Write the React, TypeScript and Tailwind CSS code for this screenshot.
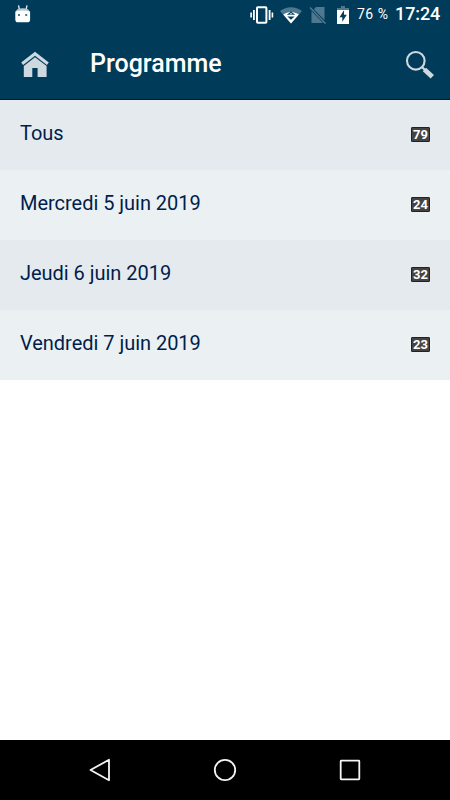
import type { ReactNode } from 'react';

interface Day {
  label: string;
  count: number;
}

const days: Day[] = [
  { label: 'Tous', count: 79 },
  { label: 'Mercredi 5 juin 2019', count: 24 },
  { label: 'Jeudi 6 juin 2019', count: 32 },
  { label: 'Vendredi 7 juin 2019', count: 23 },
];

function DroidIcon() {
  return (
    <svg width="16" height="20" viewBox="0 0 16 20">
      <path d="M3.5 .3 4.4 4.5M12 .3 11.1 4.5" stroke="#e6edf0" strokeWidth="1.3" />
      <path d="M.8 7C1 4 4 3.2 7.7 3.2s6.7.8 6.9 3.8z" fill="#b3c4cd" />
      <path d="M.3 6.4q7.4-1.6 14.8 0v8q0 2.9-2.9 2.9h-9q-2.9 0-2.9-2.9z" fill="#fff" />
      <path d="M3 9h2v2H3zM10.2 9h2v2h-2z" fill="#54788c" />
    </svg>
  );
}

function VibrateIcon() {
  return (
    <svg width="24" height="20" viewBox="0 0 24 20" fill="none" stroke="#fff">
      <rect x="7" y="2.3" width="9.4" height="15.4" rx="0.8" strokeWidth="2" />
      <path d="M3.9 5v10M19.6 5v10" strokeWidth="1.8" />
      <path d="M1.1 7.5v5M22.4 7.5v5" strokeWidth="1.6" />
    </svg>
  );
}

function WifiIcon() {
  return (
    <svg width="22" height="18" viewBox="0 0 22 18">
      <path d="M0 5C6.5-.1 15.5-.1 22 5L11 17.6z" fill="#4d7890" />
      <path d="M3.2 8.6C7.8 5 14.2 5 18.8 8.6L11 17.6z" fill="#fff" />
      <path d="M6.8 8.8 11 5.4l4.2 3.4zM7.4 10.6h7.2L11 13.8z" fill="#003c5a" />
      <path d="M9.4 8.3 11 7l1.6 1.3z" fill="#fff" />
    </svg>
  );
}

function NoSimIcon() {
  return (
    <svg width="18" height="18" viewBox="0 0 18 18">
      <path d="M7 1h8.5v13L4.8 3.3zM2.5 5 14 17H2.5z" fill="#4d7890" />
      <path d="M1 1.5 16.5 17.5" stroke="#4d7890" strokeWidth="1.6" />
    </svg>
  );
}

function BatteryIcon() {
  return (
    <svg width="12" height="18" viewBox="0 0 12 18">
      <path d="M0 2h4V0h4v2h4v3H0z" fill="#4d7890" />
      <path d="M0 4h12v14H0z" fill="#fff" />
      <path d="M7 4.3 2.5 11.2h2.8v4.6L9.8 8.8H7z" fill="#003c5a" />
    </svg>
  );
}

function HomeIcon() {
  return (
    <svg width="28" height="27" viewBox="0 0 28 27" fill="#ced8df">
      <path d="M14 .8 27.8 11.6l-1.9 2.3L14 4.8 2.1 13.9.2 11.6z" />
      <path d="M14 6.3 25.6 15v11h-9v-9h-5.3v9H2.8V15z" />
    </svg>
  );
}

function SearchIcon() {
  return (
    <svg width="30" height="29" viewBox="0 0 30 29" fill="none" stroke="#ced8df">
      <circle cx="10.8" cy="10.8" r="8.8" strokeWidth="2.1" />
      <path d="m17 17 3 3" strokeWidth="2.2" />
      <path d="m19.4 19.4 7.9 7.4" strokeWidth="4.8" />
    </svg>
  );
}

function StatusBar() {
  return (
    <div className="flex h-[30px] items-center pl-[15px] text-white">
      <DroidIcon />
      <div className="ml-[219px] flex items-center">
        <VibrateIcon />
        <div className="ml-[6px]"><WifiIcon /></div>
        <div className="ml-[7px]"><NoSimIcon /></div>
        <div className="ml-[10px]"><BatteryIcon /></div>
      </div>
      <span className="ml-[8px] w-[38px] pb-[2px] text-[14px] leading-[26px] tracking-[0.5px] whitespace-nowrap">76 %</span>
      <span className="pb-[2px] text-[18px] leading-[26px] font-medium tracking-[-0.1px]">17:24</span>
    </div>
  );
}

function DayRow({ day }: { day: Day }) {
  return (
    <li className="flex h-[70px] items-center justify-between bg-[#ebf0f3] pr-5 pl-5 odd:bg-[#e5eaee]">
      <span className="pb-[4px] text-[20px] leading-[24px] tracking-[-0.03px] text-[#001d4b]">{day.label}</span>
      <span className="mb-px flex h-[15px] w-[19px] items-center justify-center rounded-[1px] border border-[#222] bg-[#444] text-[13px] leading-none font-bold text-white">
        {day.count}
      </span>
    </li>
  );
}

function NavButton({ children }: { children: ReactNode }) {
  return (
    <button className="flex h-[60px] w-[125px] items-center justify-center">
      <svg width="30" height="30" viewBox="0 0 30 30" fill="none" stroke="#f4f4f4" strokeWidth="1.8" strokeLinejoin="round">
        {children}
      </svg>
    </button>
  );
}

export default function App() {
  return (
    <div className="flex h-[800px] w-[450px] flex-col overflow-hidden bg-white font-['Roboto',sans-serif]">
      <header className="h-[100px] border-b border-[#00173b] bg-[#003c5a]">
        <StatusBar />
        <div className="flex h-[69px] items-center justify-between pr-[15px] pl-[21px]">
          <div className="flex items-center">
            <HomeIcon />
            <h1 className="ml-[41px] pb-[2px] text-[25px] leading-[30px] font-medium text-white">Programme</h1>
          </div>
          <SearchIcon />
        </div>
      </header>

      <ul className="flex-1">
        {days.map((day) => (
          <DayRow key={day.label} day={day} />
        ))}
      </ul>

      <nav className="flex h-[60px] justify-center bg-black">
        <NavButton>
          <path d="M5.5 15 24 4.8v20.4z" />
        </NavButton>
        <NavButton>
          <circle cx="15" cy="15" r="10.2" />
        </NavButton>
        <NavButton>
          <rect x="5.7" y="5.7" width="18.6" height="18.6" rx="0.5" />
        </NavButton>
      </nav>
    </div>
  );
}
